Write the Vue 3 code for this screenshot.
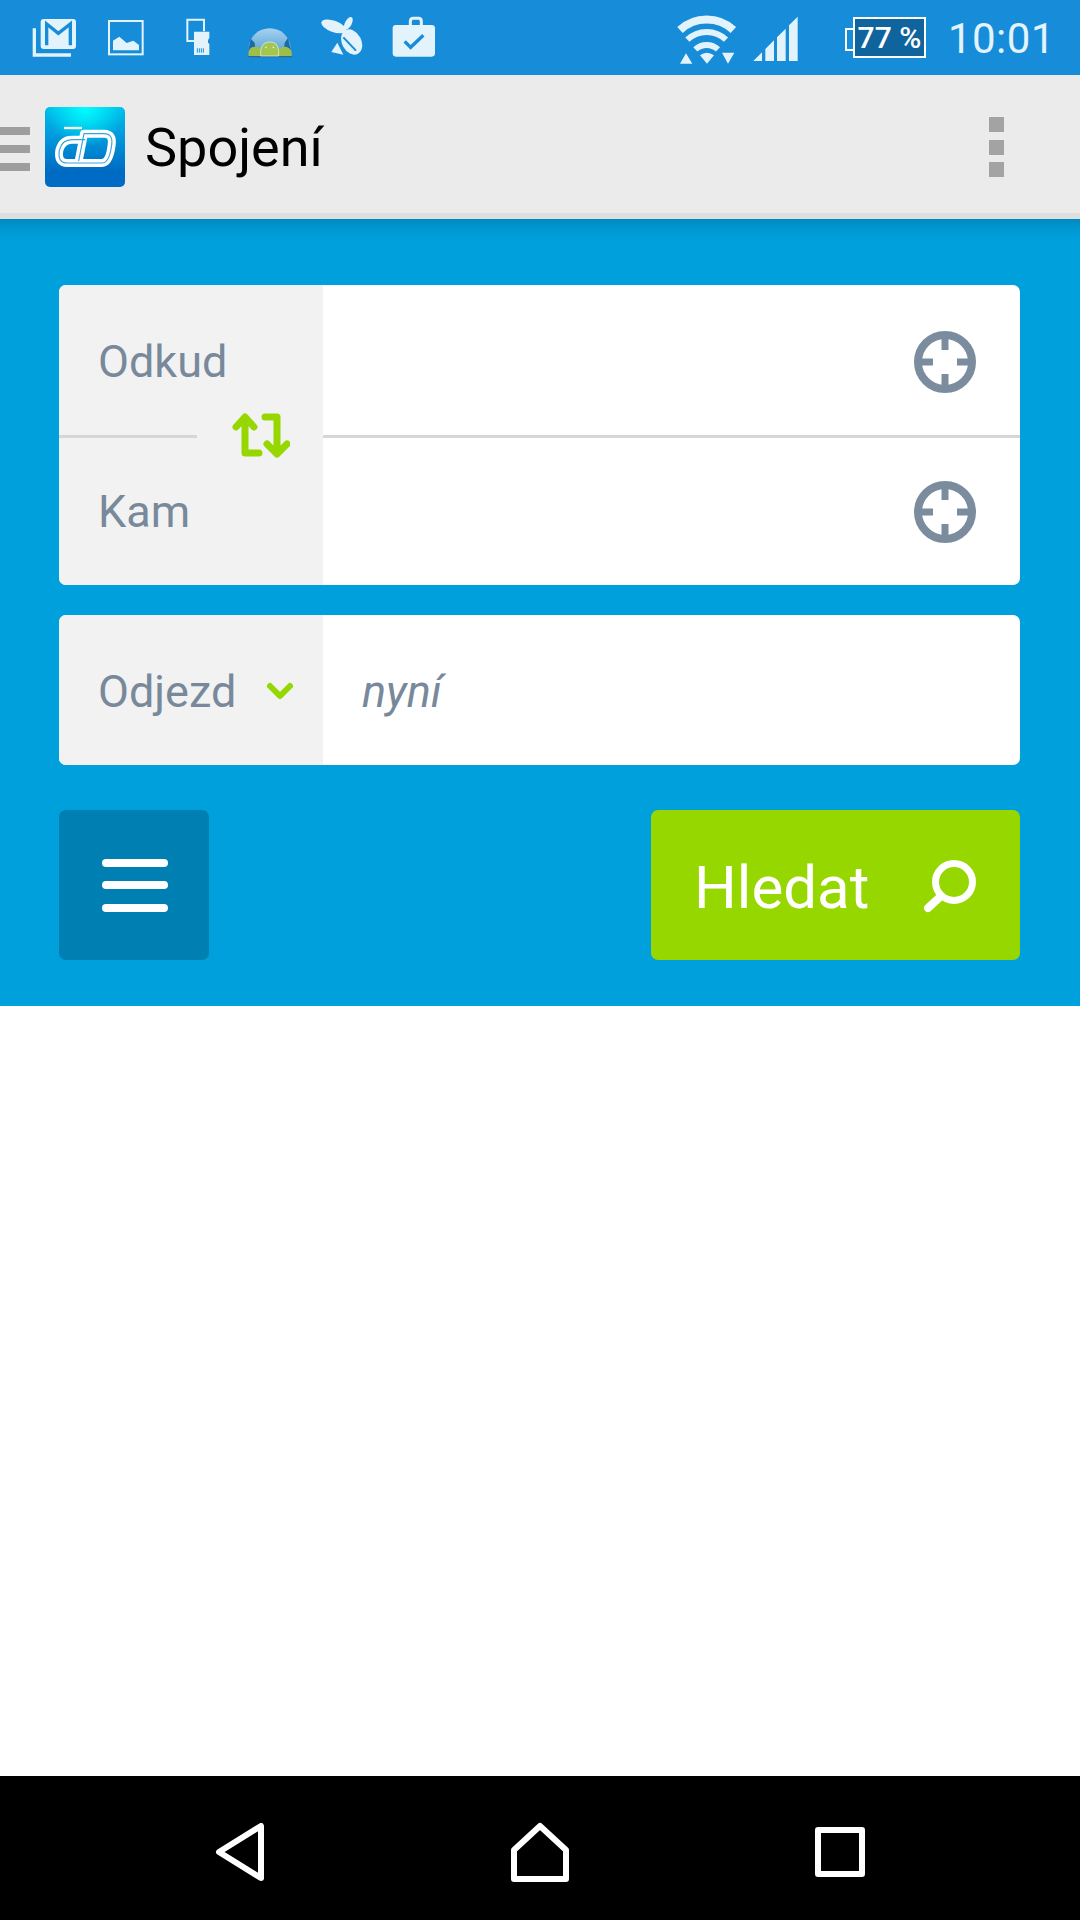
<script setup>
const routeRows = ["Odkud", "Kam"];
</script>

<template>
  <div class="screen">
    <div class="status-bar">
      <svg class="icon" width="45" height="75" viewBox="96 0 135 225">
        <path d="M103 85V165H213" fill="none" stroke="#e3f3fc" stroke-width="10" />
        <rect x="122" y="57" width="106" height="90" rx="9" fill="#e3f3fc" />
        <path d="M140 136V72L175 100L211 72V136" fill="none" stroke="#178dd9" stroke-width="10" />
      </svg>
      <svg class="icon icon-image" width="38" height="75" viewBox="321 0 114 225">
        <rect x="327" y="63" width="101" height="100" fill="none" stroke="#e3f3fc" stroke-width="6" />
        <path d="M339 151V122L358 110L380 129L400 122L417 135V151Z" fill="#e3f3fc" />
      </svg>
      <svg class="icon icon-sd" width="26" height="75" viewBox="555 0 78 225">
        <path d="M582 123H562V59H612V94" fill="none" stroke="#e3f3fc" stroke-width="6" />
        <path d="M582 95H628V114L624 120V128L628 132V165H582Z" fill="#e3f3fc" />
        <path d="M592 145V158M598 145V158M604 145V158M610 145V158" stroke="#178dd9" stroke-width="3" />
      </svg>
      <svg class="icon icon-android" width="48" height="75" viewBox="738 0 144 225">
        <defs>
          <linearGradient id="globeFill" x1="0" y1="0" x2="0" y2="1">
            <stop offset="0" stop-color="#a6d2ee" />
            <stop offset="1" stop-color="#4d9bd4" />
          </linearGradient>
        </defs>
        <path d="M746 170V145A63 60 0 0 1 872 145V170Z" fill="url(#globeFill)" />
        <path d="M745 152L752 116L764 128L766 150ZM873 152L864 114L854 128L852 150Z" fill="#1d6aa8" />
        <path d="M745 172H876V168H745Z" fill="#2f6b8f" />
        <path d="M746 168V156Q748 140 766 140Q782 140 785 152V168Z" fill="#9dbf4a" />
        <path d="M834 168V152Q838 140 854 140Q872 142 875 156V168Z" fill="#9dbf4a" />
        <path d="M782 168V152Q784 126 810 126Q834 126 836 152V168Z" fill="#a5c64e" stroke="#e3f3fc" stroke-width="2" />
        <circle cx="798" cy="142" r="2.5" fill="#e3f3fc" />
        <circle cx="820" cy="142" r="2.5" fill="#e3f3fc" />
      </svg>
      <svg class="icon icon-swarm" width="44" height="75" viewBox="960 0 132 225">
        <ellipse cx="1001" cy="79" rx="39" ry="17" transform="rotate(20 1001 79)" fill="#e3f3fc" />
        <ellipse cx="1045" cy="70" rx="10" ry="21" transform="rotate(28 1045 70)" fill="#e3f3fc" />
        <ellipse cx="1055" cy="126" rx="29" ry="40" transform="rotate(-28 1055 126)" fill="#e3f3fc" />
        <path d="M1012 128L994 156L1030 164Z" fill="#e3f3fc" />
        <path d="M1030 112L1068 152" stroke="#178dd9" stroke-width="6" />
      </svg>
      <svg class="icon icon-case" width="44" height="75" viewBox="1176 0 132 225">
        <path d="M1231 75V64Q1231 55 1240 55H1256Q1264 55 1264 64V75" fill="none" stroke="#e3f3fc" stroke-width="9" />
        <rect x="1178" y="75" width="127" height="95" rx="10" fill="#e3f3fc" />
        <path d="M1214 124L1232 142L1270 106" fill="none" stroke="#178dd9" stroke-width="10" />
      </svg>

      <svg class="icon icon-wifi" width="60" height="75" viewBox="111 0 180 225">
        <g fill="none" stroke="#e3f3fc">
          <path d="M120 90A118 118 0 0 1 280 90" stroke-width="24" />
          <path d="M142 119A84 84 0 0 1 258 119" stroke-width="18" />
          <path d="M166 148A50 50 0 0 1 234 148" stroke-width="18" />
        </g>
        <path d="M180 166Q200 150 222 166L201 191ZM120 191L138 160L157 191ZM246 158H283L264 191Z" fill="#e3f3fc" />
      </svg>
      <svg class="icon icon-signal" width="47" height="75" viewBox="336 0 141 225">
        <path d="M340 183L366 157V183ZM376 147L402 121V183H376ZM411 112L437 86V183H411ZM447 76L473 50V183H447Z" fill="#e3f3fc" />
      </svg>
      <div class="battery">77 %</div>
      <div class="clock">10:01</div>
    </div>

    <header class="app-bar">
      <div class="nav-toggle">
        <span></span>
        <span></span>
        <span></span>
      </div>
      <svg class="logo" width="80" height="80" viewBox="135 110 240 240">
        <defs>
          <linearGradient id="logoFill" x1="0" y1="0" x2="0" y2="1">
            <stop offset="0" stop-color="#00bdea" />
            <stop offset="0.4" stop-color="#0096da" />
            <stop offset="0.8" stop-color="#006bc4" />
          </linearGradient>
          <radialGradient id="logoGlow" cx="0.5" cy="0" r="0.5">
            <stop offset="0" stop-color="#00ffff" />
            <stop offset="1" stop-color="#00ffff" stop-opacity="0" />
          </radialGradient>
        </defs>
        <rect x="135" y="110" width="240" height="240" rx="15" fill="url(#logoFill)" />
        <rect x="135" y="110" width="240" height="240" rx="15" fill="url(#logoGlow)" />
        <g fill="none" stroke-linejoin="round">
          <g stroke="#fff" stroke-width="24">
            <path d="M256 208H216Q186 208 178 240Q172 278 202 278H306" />
            <path d="M236 272L252 190H312Q340 190 335 224Q328 278 306 278" />
          </g>
          <g stroke="#3aa4e4" stroke-width="3.5">
            <path d="M256 208H216Q186 208 178 240Q172 278 202 278H306" />
            <path d="M236 272L252 190H312Q340 190 335 224Q328 278 306 278" />
          </g>
          <path d="M192 173H246" stroke="#fff" stroke-width="7" />
        </g>
      </svg>
      <h1 class="title">Spojení</h1>
      <div class="more">
        <span></span>
        <span></span>
        <span></span>
      </div>
    </header>

    <main class="panel">
      <div class="card route-card">
        <div v-for="label in routeRows" :key="label" class="row route-row">
          <div class="side">{{ label }}</div>
          <div class="field">
            <svg class="target" width="62" height="62" viewBox="0 0 62 62">
              <circle cx="31" cy="31" r="27" fill="none" stroke="#7a8c9e" stroke-width="8" />
              <path d="M31 6V19M31 43V56M6 31H19M43 31H56" stroke="#7a8c9e" stroke-width="7" />
            </svg>
          </div>
        </div>
        <div class="swap">
          <svg width="58" height="46" viewBox="0 0 58 46">
            <g fill="none" stroke="#96d700" stroke-width="7" stroke-linecap="round" stroke-linejoin="round">
              <path d="M4 15L13 5L22 15M13 6V41H27" />
              <path d="M33 5H45V41M35 32L45 42L55 32" />
            </g>
          </svg>
        </div>
      </div>

      <div class="card time-card">
        <div class="row">
          <div class="side side-select">
            Odjezd
            <svg class="chevron" width="26" height="18" viewBox="0 0 26 18">
              <path d="M3 4L13 14L23 4" fill="none" stroke="#96d700" stroke-width="6" stroke-linecap="round" stroke-linejoin="round" />
            </svg>
          </div>
          <div class="field now">nyní</div>
        </div>
      </div>

      <div class="actions">
        <button class="menu-btn">
          <span></span>
          <span></span>
          <span></span>
        </button>
        <button class="search-btn">
          Hledat
          <svg class="search-icon" width="54" height="54" viewBox="0 0 54 54">
            <circle cx="31" cy="23" r="18.5" fill="none" stroke="#fff" stroke-width="7" />
            <path d="M17 38L5 49" stroke="#fff" stroke-width="8" stroke-linecap="round" />
          </svg>
        </button>
      </div>
    </main>

    <div class="content"></div>

    <nav class="nav-bar">
      <div class="nav-item">
        <svg width="52" height="58" viewBox="0 0 52 58">
          <path d="M5 29L47 3V55Z" fill="none" stroke="#fff" stroke-width="6" stroke-linejoin="round" />
        </svg>
      </div>
      <div class="nav-item">
        <svg width="58" height="60" viewBox="0 0 58 60">
          <path d="M29 4L3 28V57H55V28Z" fill="none" stroke="#fff" stroke-width="6" stroke-linejoin="round" />
        </svg>
      </div>
      <div class="nav-item">
        <svg width="50" height="50" viewBox="0 0 50 50">
          <rect x="3" y="3" width="44" height="44" fill="none" stroke="#fff" stroke-width="6" stroke-linejoin="round" />
        </svg>
      </div>
    </nav>
  </div>
</template>

<style scoped>
.screen {
  width: 1080px;
  height: 1920px;
  display: flex;
  flex-direction: column;
  background: #fff;
  font-family: Roboto, "Liberation Sans", sans-serif;
  overflow: hidden;
}

.status-bar {
  height: 75px;
  flex: none;
  display: flex;
  align-items: center;
  padding: 0 25px 0 32px;
  background: #178dd9;
  color: #e3f3fc;
}

.icon {
  flex: none;
}

.icon-image {
  margin-left: 30px;
}

.icon-sd {
  margin-left: 40px;
}

.icon-android {
  margin-left: 35px;
}

.icon-swarm {
  margin-left: 26px;
}

.icon-case {
  margin-left: 28px;
}

.icon-wifi {
  margin-left: auto;
}

.icon-signal {
  margin-left: 15px;
}

.battery {
  position: relative;
  width: 73px;
  height: 41px;
  margin-left: 54px;
  box-sizing: border-box;
  border: 2px solid #fff;
  background: #0f649e;
  color: #fff;
  font-size: 30px;
  font-weight: 500;
  line-height: 37px;
  text-align: center;
  white-space: nowrap;
}

.battery::before {
  content: "";
  position: absolute;
  left: -10px;
  top: 9px;
  width: 8px;
  height: 19px;
  border: 2px solid #fff;
  border-right: none;
}

.clock {
  margin-left: 22px;
  padding-top: 3px;
  font-size: 42px;
  line-height: 50px;
  letter-spacing: 0.5px;
}

.app-bar {
  height: 144px;
  flex: none;
  box-sizing: border-box;
  display: flex;
  align-items: center;
  padding-top: 6px;
  background: #ebebeb;
  border-bottom: 6px solid #dfdfdf;
}

.nav-toggle {
  width: 30px;
  margin-top: 4px;
  display: flex;
  flex-direction: column;
  gap: 10px;
}

.nav-toggle span {
  height: 8px;
  background: #9e9e9e;
}

.logo {
  margin-left: 15px;
  flex: none;
}

.title {
  margin: 0 0 0 20px;
  font-size: 54px;
  font-weight: 400;
  color: #000;
}

.more {
  margin-left: auto;
  margin-right: 76px;
  display: flex;
  flex-direction: column;
  gap: 7.5px;
}

.more span {
  width: 15px;
  height: 15px;
  background: #a3a3a3;
}

.panel {
  height: 787px;
  flex: none;
  box-sizing: border-box;
  padding: 66px 60px 0 59px;
  background: linear-gradient(#0088bf, #0097d2 10px, #00a0dc 20px);
}

.card {
  position: relative;
  border-radius: 7px;
  overflow: hidden;
  background: #fff;
}

.time-card {
  margin-top: 30px;
}

.row {
  display: flex;
  height: 150px;
}

.side,
.field {
  padding-top: 2px;
  box-sizing: border-box;
}

.route-row:first-child {
  height: 153px;
  border-bottom: 3px solid #d6d6d6;
  box-sizing: border-box;
}

.route-row:first-child .side,
.route-row:first-child .field {
  padding-top: 3px;
}

.route-row:nth-child(2) {
  height: 147px;
}

.route-row:nth-child(2) .side,
.route-row:nth-child(2) .field {
  padding-top: 0;
}

.side {
  width: 264px;
  flex: none;
  display: flex;
  align-items: center;
  padding-left: 39px;
  background: #f2f2f2;
  color: #78899b;
  font-size: 45px;
}

.field {
  flex: 1;
  display: flex;
  align-items: center;
  justify-content: flex-end;
  padding-right: 44px;
}

.now {
  justify-content: flex-start;
  padding-left: 39px;
  color: #78899b;
  font-size: 45px;
  font-style: italic;
}

.swap {
  position: absolute;
  left: 138px;
  top: 125px;
  width: 126px;
  height: 50px;
  display: flex;
  align-items: center;
  justify-content: center;
  padding-left: 2px;
  box-sizing: border-box;
  background: #f2f2f2;
}

.chevron {
  margin-left: 31px;
  margin-top: -1px;
}

.actions {
  display: flex;
  justify-content: space-between;
  margin-top: 45px;
}

.actions button {
  height: 150px;
  border: none;
  border-radius: 7px;
  padding: 0;
  font-family: inherit;
  cursor: pointer;
}

.menu-btn {
  width: 150px;
  display: flex;
  flex-direction: column;
  align-items: center;
  justify-content: center;
  gap: 14.5px;
  background: #007fb2;
}

.actions .menu-btn {
  padding-left: 2px;
}

.menu-btn span {
  width: 66px;
  height: 8px;
  border-radius: 4px;
  background: #fff;
}

.actions .search-btn {
  width: 369px;
  display: flex;
  align-items: center;
  justify-content: space-between;
  padding: 4px 43px 0 43px;
  background: #96d700;
  color: #fff;
  font-size: 60px;
}

.search-icon {
  margin-top: -2px;
}

.content {
  flex: 1;
  background: #fff;
}

.nav-bar {
  height: 144px;
  flex: none;
  box-sizing: border-box;
  padding-top: 8px;
  display: flex;
  justify-content: center;
  align-items: center;
  background: #000;
}

.nav-item {
  width: 300px;
  display: flex;
  justify-content: center;
}
</style>
